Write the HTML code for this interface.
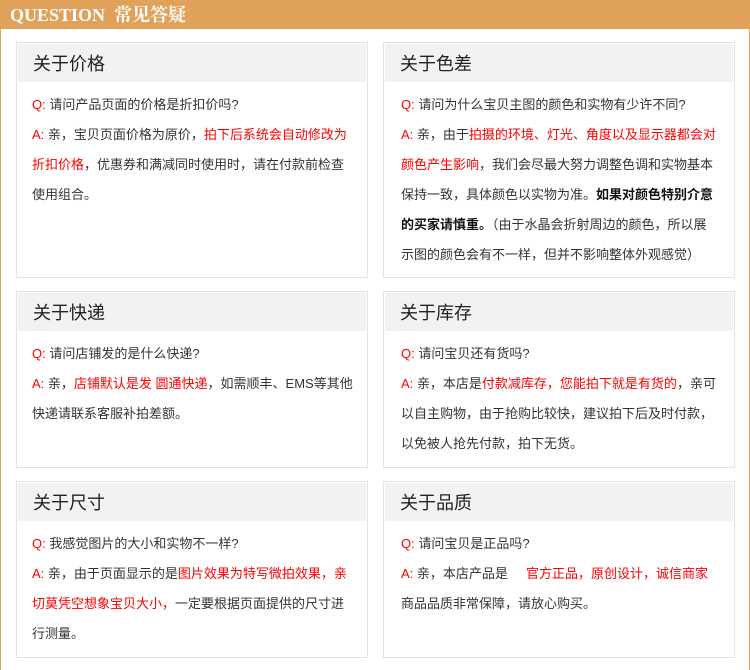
<!DOCTYPE html>
<html><head><meta charset="utf-8"><style>
*{margin:0;padding:0;box-sizing:border-box}
body{width:750px;height:670px;background:#fff;position:relative;overflow:hidden;font-family:"Liberation Sans","Noto Sans CJK SC",sans-serif;color:#333}
.top{position:absolute;left:0;top:0;width:750px;height:29px;background:#e0a25a;color:#fff;font-family:"Liberation Serif","Noto Serif CJK SC",serif;font-weight:bold;font-size:18px;line-height:30px;padding-left:10px}
.lb{position:absolute;left:0;top:29px;width:1px;height:641px;background:#e0a25a}
.rb{position:absolute;right:0;top:29px;width:1px;height:641px;background:#e0a25a}
.box{position:absolute;border:1px solid #e3e3e3;background:#fff}
.hd{position:absolute;left:1px;right:1px;top:1px;height:38px;background:#f2f2f2;font-size:18px;line-height:40px;padding-left:15px;color:#222}
.bd{position:absolute;left:15px;top:47px;font-size:13px;line-height:30px;white-space:nowrap;color:#333}
.rt .bd{left:17px}
.r{color:#f00}
b{color:#111}
</style></head><body>
<div class="top">QUESTION&nbsp; 常见答疑</div>
<div class="lb"></div><div class="rb"></div>

<div class="box" style="left:16px;top:42px;width:352px;height:236px">
<div class="hd">关于价格</div>
<div class="bd"><span class="r">Q:</span> 请问产品页面的价格是折扣价吗?<br><span class="r">A:</span> 亲，宝贝页面价格为原价，<span class="r">拍下后系统会自动修改为</span><br><span class="r">折扣价格</span>，优惠券和满减同时使用时，请在付款前检查<br>使用组合。</div>
</div>

<div class="box rt" style="left:383px;top:42px;width:352px;height:236px">
<div class="hd">关于色差</div>
<div class="bd"><span class="r">Q:</span> 请问为什么宝贝主图的颜色和实物有少许不同?<br><span class="r">A:</span> 亲，由于<span class="r">拍摄的环境、灯光、角度以及显示器都会对</span><br><span class="r">颜色产生影响</span>，我们会尽最大努力调整色调和实物基本<br>保持一致，具体颜色以实物为准。<b>如果对颜色特别介意</b><br><b>的买家请慎重。</b>（由于水晶会折射周边的颜色，所以展<br>示图的颜色会有不一样，但并不影响整体外观感觉）</div>
</div>

<div class="box" style="left:16px;top:291px;width:352px;height:177px">
<div class="hd">关于快递</div>
<div class="bd"><span class="r">Q:</span> 请问店铺发的是什么快递?<br><span class="r">A:</span> 亲，<span class="r">店铺默认是发 圆通快递</span>，如需顺丰、EMS等其他<br>快递请联系客服补拍差额。</div>
</div>

<div class="box rt" style="left:383px;top:291px;width:352px;height:177px">
<div class="hd">关于库存</div>
<div class="bd"><span class="r">Q:</span> 请问宝贝还有货吗?<br><span class="r">A:</span> 亲，本店是<span class="r">付款减库存，您能拍下就是有货的</span>，亲可<br>以自主购物，由于抢购比较快，建议拍下后及时付款，<br>以免被人抢先付款，拍下无货。</div>
</div>

<div class="box" style="left:16px;top:481px;width:352px;height:177px">
<div class="hd">关于尺寸</div>
<div class="bd"><span class="r">Q:</span> 我感觉图片的大小和实物不一样?<br><span class="r">A:</span> 亲，由于页面显示的是<span class="r">图片效果为特写微拍效果，亲</span><br><span class="r">切莫凭空想象宝贝大小，</span>一定要根据页面提供的尺寸进<br>行测量。</div>
</div>

<div class="box rt" style="left:383px;top:481px;width:352px;height:177px">
<div class="hd">关于品质</div>
<div class="bd"><span class="r">Q:</span> 请问宝贝是正品吗?<br><span class="r">A:</span> 亲，本店产品是&nbsp;&nbsp;&nbsp;&nbsp;&nbsp;<span class="r">官方正品，原创设计，诚信商家</span><br>商品品质非常保障，请放心购买。</div>
</div>
</body></html>
